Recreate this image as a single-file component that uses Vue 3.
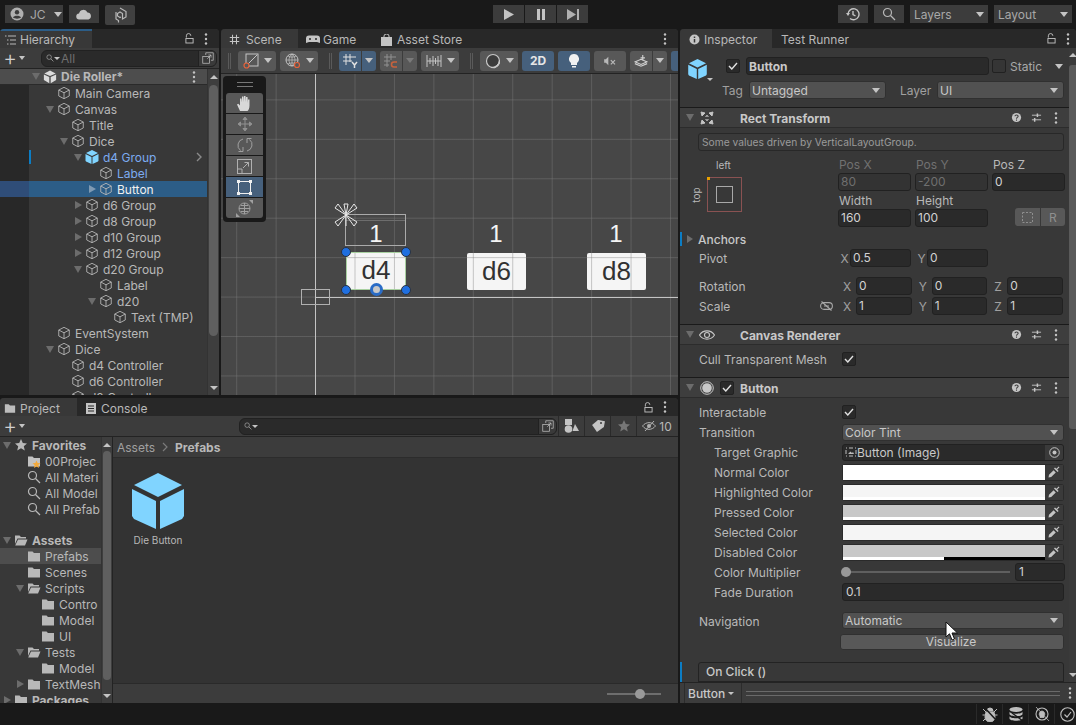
<template>
  <div class="app">
    <!-- shared icons -->
    <svg class="defs" width="0" height="0">
      <symbol id="cube" viewBox="0 0 16 16"><path d="M8 1.5 14 4.6V11.4L8 14.5 2 11.4V4.6ZM2 4.6 8 7.8 14 4.6M8 7.8V14.5" fill="none" stroke="currentColor" stroke-width="1"/></symbol>
      <symbol id="prefab" viewBox="0 0 52 56"><path d="M26 0 50 12 26 24 2 12ZM0 16 24 28V56L2 46 0 43ZM52 16 28 28V56L50 46 52 43Z" fill="currentColor"/></symbol>
      <symbol id="folder" viewBox="0 0 14 14"><path d="M1 2.5h4.5L7 4h6v8.5H1Z" fill="currentColor"/></symbol>
      <symbol id="folder-open" viewBox="0 0 14 14"><path d="M1 2.5h4.5L7 4h5v1.5H3.5L1 11ZM4 6.5h9.5L11 12.5H1.2Z" fill="currentColor"/></symbol>
      <symbol id="search" viewBox="0 0 14 14"><circle cx="5.5" cy="5.5" r="4" fill="none" stroke="currentColor" stroke-width="1.2"/><path d="M8.5 8.5 13 13" stroke="currentColor" stroke-width="1.3"/></symbol>
      <symbol id="lock" viewBox="0 0 10 12"><path d="M1.5 5V3a2.5 2.5 0 0 1 5 0" fill="none" stroke="currentColor"/><rect x="1" y="6" width="8" height="5" fill="none" stroke="currentColor"/></symbol>
      <symbol id="dots" viewBox="0 0 4 12"><circle cx="2" cy="1.5" r="1.2" fill="currentColor"/><circle cx="2" cy="6" r="1.2" fill="currentColor"/><circle cx="2" cy="10.5" r="1.2" fill="currentColor"/></symbol>
      <symbol id="grid" viewBox="0 0 14 14"><path d="M4.5 1v12M9.5 1v12M1 4.5h12M1 9.5h12" stroke="currentColor" stroke-width="1.3" fill="none"/></symbol>
      <symbol id="pop" viewBox="0 0 16 16"><rect x="1" y="6" width="9" height="9" fill="none" stroke="currentColor"/><path d="M5 4V1h10v10h-3M7 9l5-5M8.5 4H12v3.5" fill="none" stroke="currentColor"/></symbol>
      <symbol id="star" viewBox="0 0 14 14"><path d="M7 1 8.8 5 13 5.4 9.8 8.2 10.8 12.5 7 10.2 3.2 12.5 4.2 8.2 1 5.4 5.2 5Z" fill="currentColor"/></symbol>
      <symbol id="help" viewBox="0 0 12 12"><circle cx="6" cy="6" r="5" fill="currentColor"/><path d="M4.3 4.7C4.3 2.9 7.8 2.9 7.8 4.7 7.8 6 6 5.8 6 7.3M6 8.3v1.3" stroke="#3e3e3e" stroke-width="1.2" fill="none"/></symbol>
      <symbol id="sliders" viewBox="0 0 12 12"><path d="M1 3.5h10M1 8.5h10" stroke="currentColor" fill="none"/><path d="M7 1.5v4M4 6.5v4" stroke="currentColor" stroke-width="1.6" fill="none"/></symbol>
      <symbol id="pick" viewBox="0 0 12 12"><path d="M.5 11.5 1 8.8 5.6 4.2 7.8 6.4 3.2 11ZM6 2.4 9.6 6 10.6 5 9.2 3.6 11.5 1.3 10.7.5 8.4 2.8 7 1.4Z" fill="currentColor"/></symbol>
      <symbol id="gizmo" viewBox="0 0 24 24"><path d="M12 12 4 1 1 5ZM12 12 20 1 23 5ZM12 12 1 19 4 23ZM12 12 23 19 20 23ZM12 12 10 1H14ZM12 12V23" fill="none" stroke="currentColor" stroke-width="1"/></symbol>
    </svg>

    <!-- top toolbar -->
    <header class="topbar">
      <div class="tb-group">
        <button class="tb-btn account">
          <svg class="ic14" viewBox="0 0 14 14"><circle cx="7" cy="7" r="6.5" fill="#b0b0b0"/><circle cx="7" cy="5.2" r="2.2" fill="#3c3c3c"/><path d="M3 10.5C4 8 10 8 11 10.5 9.5 12 4.5 12 3 10.5Z" fill="#3c3c3c"/></svg>
          <span>JC</span><i class="caret"></i>
        </button>
        <button class="tb-btn cloud">
          <svg width="16" height="11" viewBox="0 0 16 11"><path d="M3.5 10.5a3 3 0 0 1-.5-6 4.5 4.5 0 0 1 8.5-1 3.6 3.6 0 0 1 1 7Z" fill="#c4c4c4"/></svg>
        </button>
        <button class="tb-btn collab">
          <svg width="14" height="16" viewBox="0 0 14 16"><path d="M7 1 13 4.5V10L9.5 12V6.5L7 5 4.5 6.5V9L7 10.5 8 10M3 5V12L5.5 13.5V15.5" fill="none" stroke="#b8b8b8" stroke-width="1.2"/></svg>
        </button>
      </div>
      <div class="tb-group play">
        <button class="tb-btn"><svg width="10" height="11" viewBox="0 0 10 11"><path d="M0 0 10 5.5 0 11Z" fill="#c4c4c4"/></svg></button>
        <button class="tb-btn"><svg width="8" height="11" viewBox="0 0 8 11"><path d="M0 0h3v11H0ZM5 0h3v11H5Z" fill="#c4c4c4"/></svg></button>
        <button class="tb-btn"><svg width="12" height="11" viewBox="0 0 12 11"><path d="M0 0 9 5.5 0 11ZM10 0h2v11h-2Z" fill="#b0b0b0"/></svg></button>
      </div>
      <div class="tb-group right">
        <button class="tb-btn cloud">
          <svg width="14" height="14" viewBox="0 0 14 14"><path d="M2 7A5.5 5.5 0 1 1 4 11.5M7 4v3.5L9.5 9" fill="none" stroke="#c4c4c4" stroke-width="1.4"/><path d="M0 6h4L2 9Z" fill="#c4c4c4"/></svg>
        </button>
        <button class="tb-btn cloud"><svg class="ic14 light"><use href="#search"/></svg></button>
        <button class="tb-btn drop"><span>Layers</span><i class="caret"></i></button>
        <button class="tb-btn drop"><span>Layout</span><i class="caret"></i></button>
      </div>
    </header>

    <main class="workspace">
      <div class="left">
        <div class="left-top">
          <!-- hierarchy -->
          <section class="panel hierarchy">
            <div class="tabs">
              <div class="tab on hier-tab">
                <svg width="11" height="10" viewBox="0 0 11 10"><path d="M0 1h1.5M3 1h8M2 5h1.5M5 5h6M2 9h1.5M5 9h6" stroke="#b8b8b8" fill="none"/></svg>
                <span>Hierarchy</span>
              </div>
              <div class="tab-tools wide-pad">
                <svg class="lock"><use href="#lock"/></svg>
                <svg class="dots"><use href="#dots"/></svg>
              </div>
            </div>
            <div class="bar">
              <span class="plus">+</span><i class="caret small"></i>
              <div class="search hsearch">
                <svg class="ic10"><use href="#search"/></svg><i class="caret tiny"></i>
                <span class="ph">All</span>
                <span class="pop"><svg class="ic12"><use href="#pop"/></svg></span>
              </div>
            </div>
            <div class="hier-body">
              <div class="tree">
                <div
                  v-for="row in hierarchyRows"
                  :key="row.id"
                  class="hrow"
                  :class="{ sel: row.selected, scene: row.scene, prefab: row.prefab }"
                  :style="{ paddingLeft: 43 + row.depth * 14 + 'px' }"
                >
                  <i v-if="row.selected" class="gutter-sel"></i>
                  <i v-if="row.changed" class="changed"></i>
                  <span class="slot"><i v-if="row.arrow" :class="row.arrow === 'down' ? 'tri-d' : 'tri-r'"></i></span>
                  <svg v-if="row.scene" class="ic14 logo" viewBox="0 0 16 16"><path d="M8 .5 14.5 4 8 6.8 1.5 4ZM1 5.2 7.2 8V15L1 11.5ZM15 5.2 8.8 8V15L15 11.5Z" fill="currentColor"/></svg>
                  <svg v-else-if="row.blue" class="ic14 bluecube"><use href="#prefab"/></svg>
                  <svg v-else class="ic14"><use href="#cube"/></svg>
                  <span class="label">{{ row.name }}</span>
                  <svg v-if="row.scene" class="dots scene-dots"><use href="#dots"/></svg>
                  <svg v-if="row.blue" class="more" width="6" height="10" viewBox="0 0 6 10"><path d="M1 1 5 5 1 9" fill="none" stroke="#8a8a8a" stroke-width="1.4"/></svg>
                </div>
              </div>
              <div class="vbar">
                <i class="tri-u"></i>
                <div class="vthumb hthumb"></div>
                <i class="tri-dn"></i>
              </div>
            </div>
          </section>

          <!-- scene -->
          <section class="panel scene">
            <div class="tabs">
              <div class="tab on scene-tab"><svg class="ic11"><use href="#grid"/></svg><span>Scene</span></div>
              <div class="tab game-tab">
                <svg width="14" height="9" viewBox="0 0 14 9"><path d="M3 .5h8a3 3 0 0 1 3 3V8L11 7H3L0 8V3.5a3 3 0 0 1 3-3Z" fill="#c4c4c4"/><circle cx="4" cy="4" r="1" fill="#282828"/><circle cx="10" cy="4" r="1" fill="#282828"/></svg>
                <span>Game</span>
              </div>
              <div class="tab store-tab">
                <svg width="11" height="12" viewBox="0 0 11 12"><path d="M3 3V2a2.5 2 0 0 1 5 0v1" fill="none" stroke="#c4c4c4"/><path d="M0 3h11v9H0Z" fill="#c4c4c4"/></svg>
                <span>Asset Store</span>
              </div>
              <div class="tab-tools wide-pad"><svg class="dots"><use href="#dots"/></svg></div>
            </div>
            <div class="bar scene-bar">
              <i class="sep"></i>
              <button class="sb w38">
                <svg class="ic16" viewBox="0 0 16 16"><rect x="3" y="1" width="12" height="12" fill="none" stroke="#c4c4c4"/><path d="M5 11 14 2" stroke="#c4c4c4"/><circle cx="3.5" cy="12.5" r="2.5" fill="#585858" stroke="#e8623a" stroke-width="1.2"/></svg>
                <i class="caret"></i>
              </button>
              <button class="sb w38">
                <svg class="ic16" viewBox="0 0 16 16"><circle cx="7" cy="7" r="6" fill="none" stroke="#c4c4c4"/><path d="M1 7h12M7 1v12M3 3c3 1.5 5 1.5 8 0M3 11c3-1.5 5-1.5 8 0M7 1C3 4 3 10 7 13M7 1c4 3 4 9 0 12" fill="none" stroke="#c4c4c4" stroke-width=".7"/><circle cx="12" cy="12" r="2.5" fill="#585858" stroke="#e8623a" stroke-width="1.2"/></svg>
                <i class="caret"></i>
              </button>
              <i class="sep"></i>
              <div class="split">
                <button class="sb on seg-l">
                  <svg class="ic16" viewBox="0 0 16 16"><path d="M4 1v11M8 1v8M1 4h13M1 8h9" stroke="#e0e0e0" fill="none"/><path d="M10 9 12.5 12 15 9M12.5 12v3" stroke="#e0e0e0" stroke-width="1.5" fill="none"/></svg>
                </button>
                <button class="sb on seg-r"><i class="caret"></i></button>
              </div>
              <div class="split">
                <button class="sb seg-l">
                  <svg class="ic16" viewBox="0 0 16 16"><path d="M4 1v13M8 1v6M1 4h12M1 8h6M1 12h5" stroke="#909090" fill="none"/><path d="M14 9H11a2.5 2.5 0 0 0 0 5h3" stroke="#c8623c" stroke-width="1.5" fill="none"/></svg>
                </button>
                <button class="sb seg-r"><i class="caret dim"></i></button>
              </div>
              <button class="sb w38">
                <svg class="ic16" viewBox="0 0 16 16"><path d="M1 2v12M15 2v12M1 8h14M4 5v6M7 3v10M9.5 5v6M12 3v10" fill="none" stroke="#c4c4c4"/></svg>
                <i class="caret"></i>
              </button>
              <i class="sep"></i>
              <button class="sb w38">
                <svg class="ic16" viewBox="0 0 16 16"><circle cx="8" cy="8" r="6.5" fill="#3c3c3c" stroke="#c8c8c8" stroke-width="1.2"/><path d="M14.5 7A6.5 6.5 0 0 1 6 14.5 8 8 0 0 0 14.5 7Z" fill="#c8c8c8" stroke="#c8c8c8"/></svg>
                <i class="caret"></i>
              </button>
              <button class="sb on w32 two-d">2D</button>
              <button class="sb on w32">
                <svg width="10" height="14" viewBox="0 0 10 14"><path d="M5 0a5 5 0 0 1 3 9v2H2V9A5 5 0 0 1 5 0ZM3 12h4v1.5H3Z" fill="#f0f0f0"/></svg>
              </button>
              <button class="sb w32">
                <svg width="12" height="10" viewBox="0 0 14 12"><path d="M0 4h2l3-3v10L2 8H0Z" fill="#b8b8b8"/><path d="M8 5l5 5M13 5l-5 5" stroke="#b8b8b8" stroke-width="1.5" fill="none"/></svg>
              </button>
              <div class="split">
                <button class="sb seg-l">
                  <svg width="14" height="14" viewBox="0 0 16 16"><path d="M8 6 15 9 8 12 1 9ZM1 11l7 3 7-3" fill="none" stroke="#d0d0d0" stroke-width="1.3"/><path d="M10 1v6M7.5 4.5h5" stroke="#d0d0d0" stroke-width="1.3"/></svg>
                </button>
                <button class="sb seg-r"><i class="caret"></i></button>
              </div>
              <button class="sb on stub"></button>
            </div>

            <div class="viewport">
              <!-- canvas contents, placed at their scene coordinates -->
              <span class="count" style="left:145px">1</span>
              <span class="count" style="left:265px">1</span>
              <span class="count" style="left:385px">1</span>
              <div class="die die-sel">d4</div>
              <div class="die" style="left:246px">d6</div>
              <div class="die" style="left:366px">d8</div>

              <div class="gridlines"></div>
              <i class="axis-v"></i>
              <i class="axis-h"></i>
              <i class="origin-box"></i>
              <i class="label-rect"></i>
              <i class="label-rect-2"></i>
              <i class="sel-rect"></i>
              <svg class="anchor-star"><use href="#gizmo"/></svg>
              <i class="handle" style="left:120px;top:173px"></i>
              <i class="handle" style="left:180px;top:173px"></i>
              <i class="handle" style="left:120px;top:211px"></i>
              <i class="handle" style="left:180px;top:211px"></i>
              <i class="pivot"></i>

              <div class="palette">
                <div class="grip"></div>
                <button class="tool">
                  <svg width="17" height="17" viewBox="0 0 17 17"><path d="M4 16 1 9.5 2.3 8.8 4 10.5V3.5H5.5L6 7.5V1.5H7.5L8 7V1H9.5L10 7V2H11.5L12 8V4.5H13.5V10.5C13.5 13.5 12.5 15 11.5 16Z" fill="#d8d8d8"/></svg>
                </button>
                <button class="tool">
                  <svg width="16" height="16" viewBox="0 0 16 16"><path d="M8 1 10 3.5H6ZM8 15 6 12.5H10ZM1 8 3.5 6V10ZM15 8 12.5 10V6ZM3 8H13M8 3V13" fill="#909090" stroke="#909090"/></svg>
                </button>
                <button class="tool">
                  <svg width="16" height="16" viewBox="0 0 16 16"><path d="M3.5 13.5A6.5 6.5 0 0 1 6 2M12.5 2.5A6.5 6.5 0 0 1 10 14M10 1.5V6M6 10v4.5M6 14.5H1.5M10 1.5h4.5" fill="none" stroke="#a0a0a0" stroke-width="1"/></svg>
                </button>
                <button class="tool">
                  <svg width="15" height="15" viewBox="0 0 15 15"><rect x=".5" y=".5" width="14" height="14" fill="none" stroke="#b0b0b0"/><path d="M.5 10H5V14.5M6 9 11.5 3.5M7.5 3.5h4v4" fill="none" stroke="#b0b0b0"/></svg>
                </button>
                <button class="tool on">
                  <svg width="15" height="15" viewBox="0 0 15 15"><path d="M3 1.5h9M3 13.5h9M1.5 3v9M13.5 3v9" stroke="#f0f0f0" fill="none"/><path d="M0 0h3v3H0ZM12 0h3v3h-3ZM0 12h3v3H0ZM12 12h3v3h-3Z" fill="#f0f0f0"/></svg>
                </button>
                <button class="tool">
                  <svg width="17" height="17" viewBox="0 0 17 17"><circle cx="8.5" cy="8.5" r="5.5" fill="none" stroke="#a0a0a0"/><path d="M8.5 3v11M3 8.5h11M5 5.5h7M5 11.5h7" stroke="#a0a0a0" fill="none"/><path d="M13 0H17V4ZM0 17V13L4 17Z" fill="#a0a0a0"/></svg>
                </button>
              </div>
            </div>
          </section>
        </div>

        <!-- project -->
        <section class="panel project">
          <div class="tabs">
            <div class="tab on proj-tab"><svg class="ic12"><use href="#folder"/></svg><span>Project</span></div>
            <div class="tab console-tab">
              <svg width="10" height="11" viewBox="0 0 10 11"><path d="M0 0h10v11H0Z" fill="#c4c4c4"/><path d="M2 3h6M2 5.5h6M2 8h6" stroke="#282828"/></svg>
              <span>Console</span>
            </div>
            <div class="tab-tools wide-pad">
              <svg class="lock"><use href="#lock"/></svg>
              <svg class="dots"><use href="#dots"/></svg>
            </div>
          </div>
          <div class="bar proj-bar">
            <span class="plus">+</span><i class="caret small"></i>
            <div class="search psearch">
              <svg class="ic10"><use href="#search"/></svg><i class="caret tiny"></i>
              <span class="ph"></span>
              <span class="pop"><svg class="ic12"><use href="#pop"/></svg></span>
            </div>
            <div class="filter">
              <svg width="16" height="14" viewBox="0 0 16 14"><path d="M1 0h7v6H1Z" fill="#c4c4c4"/><circle cx="4.5" cy="10" r="3.8" fill="#c4c4c4"/><path d="M11 5 15 12H8.5Z" fill="#c4c4c4"/></svg>
            </div>
            <div class="filter">
              <svg width="14" height="12" viewBox="0 0 14 12"><path d="M6 0h7v6L7 12 1 6Z" fill="#c4c4c4" transform="rotate(10 7 6)"/><circle cx="10" cy="3" r="1" fill="#3c3c3c"/></svg>
            </div>
            <div class="filter"><svg class="ic14 dimstar"><use href="#star"/></svg></div>
            <div class="filter hidden-pkgs">
              <svg width="14" height="12" viewBox="0 0 14 12"><path d="M.5 6C4 1.5 10 1.5 13.5 6 10 10.5 4 10.5 .5 6ZM3 11 12 1" fill="none" stroke="#b0b0b0"/><circle cx="7" cy="6" r="2" fill="#b0b0b0"/></svg>
              <span>10</span>
            </div>
          </div>
          <div class="proj-body">
            <div class="proj-side">
              <div class="tree ptree">
                <div
                  v-for="row in projectRows"
                  :key="row.id"
                  class="prow"
                  :class="{ sel: row.selected, head: row.head, gap: row.gap }"
                  :style="{ paddingLeft: row.depth * 14 - 1 + 'px' }"
                >
                  <span class="slot"><i v-if="row.arrow" :class="row.arrow === 'down' ? 'tri-d' : 'tri-r'"></i></span>
                  <svg v-if="row.icon === 'favfolder'" class="ic14 fav" viewBox="0 0 14 14">
                    <path d="M1 2.5h4.5L7 4h6v8.5H1Z" fill="#c2c2c2"/>
                    <path d="M9.5 6.5 10.7 9 13.5 9.3 11.4 11.1 12 14 9.5 12.5 7 14 7.6 11.1 5.5 9.3 8.3 9Z" fill="#f3a93a"/>
                  </svg>
                  <svg v-else class="ic14"><use :href="'#' + row.icon"/></svg>
                  <span class="label">{{ row.name }}</span>
                </div>
              </div>
              <div class="vbar pbar">
                <i class="tri-u"></i>
                <div class="vthumb pthumb"></div>
                <i class="tri-dn"></i>
              </div>
            </div>
            <div class="proj-main">
              <div class="crumbs">
                <span>Assets</span>
                <svg width="6" height="10" viewBox="0 0 6 10"><path d="M1 1 5 5 1 9" fill="none" stroke="#7a7a7a" stroke-width="1.2"/></svg>
                <b>Prefabs</b>
              </div>
              <div class="assets">
                <div class="asset">
                  <svg class="bigcube"><use href="#prefab"/></svg>
                  <span>Die Button</span>
                </div>
              </div>
              <div class="proj-foot">
                <div class="zoom"><i></i></div>
              </div>
            </div>
          </div>
        </section>
      </div>

      <!-- inspector -->
      <section class="panel inspector">
        <div class="tabs">
          <div class="tab on insp-tab">
            <svg width="11" height="11" viewBox="0 0 11 11"><circle cx="5.5" cy="5.5" r="5" fill="#c4c4c4"/><path d="M5.5 2.5v1.5M5.5 5v3.5" stroke="#383838" stroke-width="1.5"/></svg>
            <span>Inspector</span>
          </div>
          <div class="tab runner-tab"><span>Test Runner</span></div>
          <div class="tab-tools">
            <svg class="lock"><use href="#lock"/></svg>
            <svg class="dots"><use href="#dots"/></svg>
          </div>
        </div>
        <div class="insp-wrap">
          <div class="insp-content">
            <div class="go-head">
              <div class="go-icon">
                <svg class="go-cube"><use href="#prefab"/></svg>
                <i class="caret tiny"></i>
              </div>
              <div class="go-fields">
                <div class="go-row">
                  <span class="check"><svg width="10" height="8" viewBox="0 0 10 8"><path d="M1 4 3.8 7 9 1" fill="none" stroke="#e0e0e0" stroke-width="1.4"/></svg></span>
                  <input class="field name" value="Button" readonly />
                  <span class="check blank"></span>
                  <span class="static">Static</span>
                  <i class="caret"></i>
                </div>
                <div class="go-row second">
                  <span class="go-lbl tag-lbl">Tag</span>
                  <div class="dropdown tag-dd"><span>Untagged</span><i class="caret"></i></div>
                  <span class="go-lbl layer-lbl">Layer</span>
                  <div class="dropdown layer-dd"><span>UI</span><i class="caret"></i></div>
                </div>
              </div>
            </div>

            <div class="comp-head">
              <i class="tri-d"></i>
              <svg class="comp-ic" viewBox="0 0 14 14"><path d="M1 1 5 2 2 5ZM13 1 12 5 9 2ZM1 13 2 9 5 12ZM13 13 9 12 12 9ZM5.5 5.5 7 4.5 8.5 5.5M5.5 8.5 7 9.5 8.5 8.5" fill="#c4c4c4" stroke="#c4c4c4"/></svg>
              <span class="comp-title">Rect Transform</span>
              <div class="comp-tools">
                <svg class="ic11"><use href="#help"/></svg>
                <svg class="ic11"><use href="#sliders"/></svg>
                <svg class="dots"><use href="#dots"/></svg>
              </div>
            </div>
            <div class="rect-body">
              <div class="helpbox">Some values driven by VerticalLayoutGroup.</div>
              <div class="rect-main">
                <div class="anchor-side">
                  <span class="left-lbl">left</span>
                  <span class="top-lbl">top</span>
                  <div class="anchor-box"><i class="inner"></i><i class="dot"></i></div>
                </div>
                <div class="rect-grid">
                  <div class="rg-cell"><span class="rg-lbl off">Pos X</span><div class="field off">80</div></div>
                  <div class="rg-cell"><span class="rg-lbl off">Pos Y</span><div class="field off">-200</div></div>
                  <div class="rg-cell"><span class="rg-lbl">Pos Z</span><div class="field">0</div></div>
                  <div class="rg-cell"><span class="rg-lbl">Width</span><div class="field">160</div></div>
                  <div class="rg-cell"><span class="rg-lbl">Height</span><div class="field">100</div></div>
                  <div class="rg-cell btns">
                    <div class="blueprint">
                      <span><svg width="11" height="11" viewBox="0 0 11 11"><rect x=".5" y=".5" width="10" height="10" fill="none" stroke="#8f8f8f" stroke-dasharray="2 1.5"/></svg></span>
                      <span>R</span>
                    </div>
                  </div>
                </div>
              </div>
              <div class="anchors-row"><i class="bluebar"></i><i class="tri-r"></i><span>Anchors</span></div>
              <div class="xyz pivot-row">
                <span class="xyz-lbl">Pivot</span>
                <span class="axis">X</span><div class="field">0.5</div>
                <span class="axis">Y</span><div class="field">0</div>
              </div>
              <div class="xyz rot-row">
                <span class="xyz-lbl">Rotation</span>
                <span class="axis">X</span><div class="field">0</div>
                <span class="axis">Y</span><div class="field">0</div>
                <span class="axis">Z</span><div class="field">0</div>
              </div>
              <div class="xyz scale-row">
                <span class="xyz-lbl">Scale</span>
                <svg class="unlink" width="13" height="10" viewBox="0 0 13 10"><rect x=".6" y="1.6" width="11.8" height="6.8" rx="3.4" fill="none" stroke="#a8a8a8" stroke-width="1.1"/><path d="M1.5 .5 11.5 9.5" stroke="#a8a8a8" stroke-width="1.1"/><path d="M4 5h5" stroke="#a8a8a8"/></svg>
                <span class="axis">X</span><div class="field">1</div>
                <span class="axis">Y</span><div class="field">1</div>
                <span class="axis">Z</span><div class="field">1</div>
              </div>
            </div>

            <div class="comp-head">
              <i class="tri-d"></i>
              <svg class="comp-ic eye" viewBox="0 0 16 12"><path d="M.5 6C4 .5 12 .5 15.5 6 12 11.5 4 11.5 .5 6Z" fill="none" stroke="#c8c8c8" stroke-width="1.1"/><circle cx="8" cy="6" r="2.5" fill="none" stroke="#c8c8c8" stroke-width="1.1"/></svg>
              <span class="comp-title">Canvas Renderer</span>
              <div class="comp-tools">
                <svg class="ic11"><use href="#help"/></svg>
                <svg class="ic11"><use href="#sliders"/></svg>
                <svg class="dots"><use href="#dots"/></svg>
              </div>
            </div>
            <div class="canvas-body">
              <div class="prop">
                <span class="prop-lbl">Cull Transparent Mesh</span>
                <span class="check"><svg width="10" height="8" viewBox="0 0 10 8"><path d="M1 4 3.8 7 9 1" fill="none" stroke="#e0e0e0" stroke-width="1.4"/></svg></span>
              </div>
            </div>

            <div class="comp-head">
              <i class="tri-d"></i>
              <svg class="comp-ic" viewBox="0 0 14 14"><circle cx="7" cy="7" r="6.3" fill="none" stroke="#c8c8c8"/><circle cx="7" cy="7" r="4.8" fill="#c8c8c8"/></svg>
              <span class="check head-check"><svg width="10" height="8" viewBox="0 0 10 8"><path d="M1 4 3.8 7 9 1" fill="none" stroke="#e0e0e0" stroke-width="1.4"/></svg></span>
              <span class="comp-title">Button</span>
              <div class="comp-tools">
                <svg class="ic11"><use href="#help"/></svg>
                <svg class="ic11"><use href="#sliders"/></svg>
                <svg class="dots"><use href="#dots"/></svg>
              </div>
            </div>
            <div class="button-body">
              <div class="prop">
                <span class="prop-lbl">Interactable</span>
                <span class="check"><svg width="10" height="8" viewBox="0 0 10 8"><path d="M1 4 3.8 7 9 1" fill="none" stroke="#e0e0e0" stroke-width="1.4"/></svg></span>
              </div>
              <div class="prop">
                <span class="prop-lbl">Transition</span>
                <div class="dropdown wide"><span>Color Tint</span><i class="caret"></i></div>
              </div>
              <div class="prop indent">
                <span class="prop-lbl">Target Graphic</span>
                <div class="objfield">
                  <svg width="12" height="10" viewBox="0 0 12 10"><path d="M1 1h1M4 1h4M10 1h1M1 9h1M4 9h4M10 9h1M1 3v4M11 3v4" stroke="#bdbdbd" fill="none"/><path d="M3 7 5.5 4.5 7 6 8 5 9 7Z" fill="#bdbdbd"/></svg>
                  <span>Button (Image)</span>
                  <span class="obj-pick"><svg width="11" height="11" viewBox="0 0 11 11"><circle cx="5.5" cy="5.5" r="4.8" fill="none" stroke="#c4c4c4"/><circle cx="5.5" cy="5.5" r="2" fill="#c4c4c4"/></svg></span>
                </div>
              </div>
              <div v-for="c in colorRows" :key="c.name" class="prop indent">
                <span class="prop-lbl">{{ c.name }}</span>
                <div class="color">
                  <div class="swatch" :style="{ background: c.color }">
                    <i class="strip" :class="c.strip"></i>
                  </div>
                  <span class="picker"><svg width="12" height="12"><use href="#pick"/></svg></span>
                </div>
              </div>
              <div class="prop indent">
                <span class="prop-lbl">Color Multiplier</span>
                <div class="slider"><i class="track"></i><i class="thumb"></i></div>
                <div class="field mult">1</div>
              </div>
              <div class="prop indent">
                <span class="prop-lbl">Fade Duration</span>
                <div class="field wide">0.1</div>
              </div>
              <div class="prop nav">
                <span class="prop-lbl">Navigation</span>
                <div class="dropdown wide"><span>Automatic</span><i class="caret"></i></div>
              </div>
              <button class="visualize">Visualize</button>
              <div class="onclick-wrap">
                <i class="bluebar"></i>
                <div class="onclick">On Click ()</div>
              </div>
            </div>
          </div>
          <div class="insp-scroll">
            <i class="tri-u"></i>
            <div class="insp-thumb"></div>
            <i class="tri-dn"></i>
          </div>
        </div>
        <div class="mini">
          <div class="mini-tab"><span>Button</span><i class="caret tiny"></i></div>
          <div class="mini-lines"></div>
          <svg class="dots"><use href="#dots"/></svg>
        </div>
      </section>
    </main>

    <!-- status bar -->
    <footer class="status">
      <span class="st-ic">
        <svg width="16" height="16" viewBox="0 0 16 16"><path d="M5 5a3 3 0 0 1 6 0ZM4 6h8l1 5a5 5 0 0 1-10 0ZM1 3l3 3M15 3l-3 3M.5 9H3M13 9h2.5M1 15l2.5-2.5M15 15l-2.5-2.5" fill="#bdbdbd" stroke="#bdbdbd"/><path d="M2 1 15 15" stroke="#191919" stroke-width="1.5"/></svg>
      </span>
      <span class="st-ic">
        <svg width="16" height="16" viewBox="0 0 16 16"><ellipse cx="8" cy="3.5" rx="6.5" ry="2.5" fill="#bdbdbd"/><path d="M1.5 5.5c0 3 13 3 13 0V8c0 3-13 3-13 0ZM1.5 10c0 3 13 3 13 0v2.5c0 3-13 3-13 0Z" fill="#bdbdbd"/><path d="M4 7 15 15" stroke="#191919" stroke-width="1.3"/></svg>
      </span>
      <span class="st-ic">
        <svg width="16" height="16" viewBox="0 0 16 16"><circle cx="8" cy="8" r="6" fill="none" stroke="#bdbdbd" stroke-width="1.1"/><path d="M8 5a3 3 0 0 1 2 5v1.5H6V10a3 3 0 0 1 2-5ZM2 1 15 15" fill="#bdbdbd" stroke="#bdbdbd" stroke-width=".8"/></svg>
      </span>
      <span class="st-ic last">
        <svg width="15" height="15" viewBox="0 0 15 15"><circle cx="7.5" cy="7.5" r="6.7" fill="none" stroke="#bdbdbd" stroke-width="1.1"/><path d="M4.5 7.5 7 10 11 5" fill="none" stroke="#bdbdbd" stroke-width="1.2"/></svg>
      </span>
    </footer>

    <!-- mouse pointer in the capture -->
    <svg class="pointer" width="14" height="20" viewBox="0 0 14 20"><path d="M1 1V16L4.5 12.8 7 19 9.5 18 7 12H12.5Z" fill="#fff" stroke="#111" stroke-width="1"/></svg>
  </div>
</template>

<script setup>
let rowId = 0
const h = (name, depth, arrow, extra = {}) => ({ id: rowId++, name, depth, arrow, ...extra })

const hierarchyRows = [
  h("Die Roller*", -1, "down", { scene: true }),
  h("Main Camera", 0),
  h("Canvas", 0, "down"),
  h("Title", 1),
  h("Dice", 1, "down"),
  h("d4 Group", 2, "down", { blue: true, prefab: true, changed: true }),
  h("Label", 3, null, { prefab: true }),
  h("Button", 3, "right", { selected: true }),
  h("d6 Group", 2, "right"),
  h("d8 Group", 2, "right"),
  h("d10 Group", 2, "right"),
  h("d12 Group", 2, "right"),
  h("d20 Group", 2, "down"),
  h("Label", 3),
  h("d20", 3, "down"),
  h("Text (TMP)", 4),
  h("EventSystem", 0),
  h("Dice", 0, "down"),
  h("d4 Controller", 1),
  h("d6 Controller", 1),
  h("d8 Controller", 1),
]

// names as far as the narrow column shows them
const projectRows = [
  h("Favorites", 0, "down", { icon: "star", head: true }),
  h("00Projec", 1, null, { icon: "favfolder" }),
  h("All Materi", 1, null, { icon: "search" }),
  h("All Model", 1, null, { icon: "search" }),
  h("All Prefab", 1, null, { icon: "search" }),
  h("Assets", 0, "down", { icon: "folder-open", head: true, gap: true }),
  h("Prefabs", 1, null, { icon: "folder", selected: true }),
  h("Scenes", 1, null, { icon: "folder" }),
  h("Scripts", 1, "down", { icon: "folder-open" }),
  h("Contro", 2, null, { icon: "folder" }),
  h("Model", 2, null, { icon: "folder" }),
  h("UI", 2, null, { icon: "folder" }),
  h("Tests", 1, "down", { icon: "folder-open" }),
  h("Model", 2, null, { icon: "folder" }),
  h("TextMesh", 1, "right", { icon: "folder" }),
  h("Packages", 0, "right", { icon: "folder", head: true }),
]

const colorRows = [
  { name: "Normal Color", color: "#ffffff", strip: "white" },
  { name: "Highlighted Color", color: "#f5f5f5", strip: "white" },
  { name: "Pressed Color", color: "#c8c8c8", strip: "white" },
  { name: "Selected Color", color: "#f5f5f5", strip: "" },
  { name: "Disabled Color", color: "#c8c8c8", strip: "half" },
]
</script>

<style>
html, body { margin: 0; background: #191919; }
</style>

<style scoped>
.app {
  position: relative;
  width: 1076px;
  height: 725px;
  overflow: hidden;
  background: #191919;
  color: #b8b8b8;
  font-family: Inter, "Liberation Sans", sans-serif;
  font-size: 12px;
  display: flex;
  flex-direction: column;
}
.app i { display: block; flex: none; }
button { font: inherit; color: inherit; border: 0; padding: 0; }
.defs { position: absolute; }
svg { display: block; flex: none; }
.ic10 { width: 8px; height: 8px; color: #a8a8a8; }
.ic11 { width: 11px; height: 11px; color: #c4c4c4; }
.ic12 { width: 12px; height: 12px; color: #bdbdbd; }
.ic14 { width: 14px; height: 14px; color: #b8b8b8; }
.ic16 { width: 16px; height: 16px; }
.lock { width: 9px; height: 11px; color: #c4c4c4; }
.dots { width: 4px; height: 12px; color: #c4c4c4; }

.caret {
  width: 0;
  height: 0;
  border-left: 4px solid transparent;
  border-right: 4px solid transparent;
  border-top: 5px solid #c4c4c4;
}
.caret.small { border-left-width: 3.5px; border-right-width: 3.5px; border-top-width: 4px; }
.caret.tiny { border-left-width: 3px; border-right-width: 3px; border-top-width: 3px; }
.caret.dim { border-top-color: #7a7a7a; }
.tri-d { width: 0; height: 0; border-left: 5px solid transparent; border-right: 5px solid transparent; border-top: 8px solid #6c6c6c; }
.tri-r { width: 0; height: 0; border-top: 5px solid transparent; border-bottom: 5px solid transparent; border-left: 8px solid #6c6c6c; }
.tri-u { width: 0; height: 0; border-left: 4px solid transparent; border-right: 4px solid transparent; border-bottom: 4px solid #c4c4c4; }
.tri-dn { width: 0; height: 0; border-left: 4px solid transparent; border-right: 4px solid transparent; border-top: 4px solid #c4c4c4; }

/* top toolbar */
.topbar { height: 29px; flex: none; display: flex; padding: 5px 4px 0 5px; box-sizing: border-box; }
.tb-group { display: flex; gap: 6px; height: 18px; }
.tb-btn { background: #3c3c3c; height: 18px; display: flex; align-items: center; justify-content: center; color: #a8a8a8; font-size: 12px; }
.account { width: 58px; justify-content: flex-start; padding-left: 5px; gap: 6px; box-sizing: border-box; }
.account .caret { margin-left: 2px; }
.cloud { width: 30px; }
.collab { width: 30px; height: 20px; border-radius: 2px; background: #404040; }
.play { margin-left: 358px; gap: 1px; }
.play .tb-btn { width: 31px; }
.right { margin-left: auto; }
.drop { width: 78px; justify-content: space-between; padding: 0 4px; box-sizing: border-box; }

/* panels */
.workspace { flex: 1; display: flex; gap: 2px; min-height: 0; }
.left { width: 678px; display: flex; flex-direction: column; gap: 3px; }
.left-top { height: 366px; display: flex; gap: 2px; }
.panel { background: #383838; display: flex; flex-direction: column; overflow: hidden; border-radius: 4px 4px 0 0; }
.tabs { height: 19px; flex: none; background: #282828; display: flex; position: relative; }
.tab { height: 19px; display: flex; align-items: center; gap: 4px; box-sizing: border-box; color: #b8b8b8; padding-top: 2px; }
.tab.on { background: #383838; }
.tab-tools { margin-left: auto; display: flex; align-items: center; gap: 10px; padding-right: 6px; }
.tab-tools.wide-pad { padding-right: 11px; }
.bar { height: 20px; flex: none; background: #3c3c3c; display: flex; align-items: center; border-bottom: 1px solid #232323; box-sizing: content-box; }
.plus { font-size: 21px; line-height: 20px; font-weight: 300; color: #d0d0d0; width: 20px; text-align: center; }
.search { height: 15px; background: #2a2a2a; border: 1px solid #212121; border-radius: 6px; display: flex; align-items: center; box-sizing: content-box; overflow: hidden; }
.search .ic10 { margin-left: 4px; }
.search .caret { margin-left: 0; }
.ph { color: #6f6f6f; margin-left: 1px; flex: 1; }
.pop { width: 17px; height: 15px; background: #3a3a3a; display: flex; align-items: center; justify-content: center; border-left: 1px solid #212121; }

/* hierarchy */
.hierarchy { width: 219px; }
.hier-tab { width: 92px; padding-left: 5px; border-top: 2px solid #2c5d87; padding-top: 0; }
.hierarchy .bar > .caret { margin-left: -1px; }
.hsearch { width: 174px; margin-left: 16px; }
.hier-body { flex: 1; display: flex; min-height: 0; }
.tree { flex: 1; min-width: 0; overflow: hidden; }
.hier-body .tree { background: linear-gradient(to right, #282828 29px, #383838 29px); }
.hrow { height: 16px; display: flex; align-items: center; position: relative; white-space: nowrap; color: #b8b8b8; }
.slot { width: 14px; height: 16px; display: flex; align-items: center; justify-content: center; flex: none; }
.slot .tri-d { border-left-width: 4.5px; border-right-width: 4.5px; border-top-width: 7px; }
.slot .tri-r { border-top-width: 4.5px; border-bottom-width: 4.5px; border-left-width: 7px; }
.label { margin-left: 4px; }
.hrow.scene { background: #4d4d4d; font-weight: 700; border-bottom: 1px solid #2a2a2a; box-sizing: border-box; }
.logo { color: #dcdcdc; }
.bluecube { color: #80d4ff; }
.scene-dots { position: absolute; left: 192px; top: 2px; }
.hrow.prefab .label { color: #7cabf0; }
.hrow.sel { background: #2c5d87; color: #fff; }
.hrow.sel .label { color: #f0f0f0; }
.hrow.sel .slot .tri-r { border-left-color: #7f9ab3; }
.gutter-sel { position: absolute; left: 0; top: 0; width: 29px; height: 16px; background: #2f4d78; }
.changed { position: absolute; left: 29px; top: 1px; width: 2px; height: 14px; background: #0c7dc4; }
.more { position: absolute; left: 196px; top: 3px; }
.vbar { width: 12px; flex: none; background: #3e3e3e; display: flex; flex-direction: column; align-items: center; border-left: 1px solid #333; box-sizing: border-box; }
.vbar .tri-u { margin-top: 6px; }
.vbar .tri-dn { margin-top: auto; margin-bottom: 5px; }
.vthumb { width: 9px; background: #5f5f5f; border-radius: 5px; }
.hthumb { height: 251px; margin-top: 6px; }

/* scene */
.scene { width: 457px; }
.scene-tab { width: 77px; padding-left: 8px; gap: 6px; }
.game-tab { margin-left: 8px; width: 75px; gap: 3px; }
.store-tab { gap: 5px; }
.scene-bar { height: 25px; gap: 0; }
.sb { height: 20px; background: #585858; border-radius: 3px; display: flex; align-items: center; justify-content: center; margin-right: 4px; flex: none; }
.sb.on { background: #46607c; }
.w38 { width: 38px; gap: 5px; }
.w32 { width: 32px; }
.two-d { font-weight: 700; color: #e6e6e6; font-size: 12px; }
.split { display: flex; margin-right: 4px; gap: 1px; }
.split .sb { margin: 0; }
.seg-l { width: 22px; border-radius: 3px 0 0 3px; }
.seg-r { width: 14px; border-radius: 0 3px 3px 0; }
.sep { width: 3px; height: 16px; margin: 0 7px; border-left: 1px solid #5a5a5a; border-right: 1px solid #5a5a5a; box-sizing: border-box; }
.stub { width: 12px; margin: 0; }
.viewport { flex: 1; position: relative; background: #474747; overflow: hidden; }
.gridlines {
  position: absolute;
  inset: 0;
  pointer-events: none;
  background-image:
    linear-gradient(to right, rgba(125, 125, 125, 0.42) 1px, transparent 1px),
    linear-gradient(to bottom, rgba(125, 125, 125, 0.42) 1px, transparent 1px);
  background-size: 39.45px 39.45px;
  background-position: 15.2px 25.4px;
}
.axis-v { position: absolute; left: 94px; top: 0; bottom: 0; width: 1px; background: #c4c4c4; }
.axis-h { position: absolute; left: 94px; right: 0; top: 223px; height: 1px; background: #c4c4c4; }
.origin-box { position: absolute; left: 80px; top: 215px; width: 27px; height: 14px; border: 1px solid #b0b0b0; }
.label-rect { position: absolute; left: 124px; top: 140px; width: 59px; height: 30px; border: 1px solid #aaa; }
.label-rect-2 { position: absolute; left: 125px; top: 146px; width: 59px; height: 1px; background: #6d6d6d; }
.sel-rect { position: absolute; left: 125px; top: 178px; width: 60px; height: 38px; border: 1px solid #a8d0a0; box-sizing: border-box; }
.anchor-star { position: absolute; left: 113px; top: 129px; width: 24px; height: 24px; color: #e8e8e8; }
.count { position: absolute; top: 146px; width: 20px; text-align: center; font: 24px "Liberation Sans", sans-serif; color: #f5f5f5; line-height: 28px; }
.die {
  position: absolute;
  left: 125px;
  top: 179px;
  width: 59px;
  height: 37px;
  background: #f5f5f5;
  border-radius: 2px;
  color: #323232;
  font: 26px "Liberation Sans", sans-serif;
  line-height: 37px;
  text-align: center;
}
.die-sel { width: 60px; height: 38px; top: 178px; }
.handle { position: absolute; width: 10px; height: 10px; border-radius: 50%; background: #1f6fe0; border: 1px solid #2a3240; box-sizing: border-box; }
.pivot { position: absolute; left: 149px; top: 209px; width: 13px; height: 13px; border-radius: 50%; border: 3px solid #2a6cc6; box-sizing: border-box; background: #c8c8c8; }
.palette { position: absolute; left: 2px; top: 2px; width: 43px; height: 146px; background: #191919; border-radius: 4px; box-sizing: border-box; padding: 17px 3px 0; display: flex; flex-direction: column; gap: 1px; }
.grip { position: absolute; left: 14px; top: 6px; width: 16px; height: 3px; border-top: 1px solid #777; border-bottom: 1px solid #777; }
.tool { height: 20px; background: #585858; display: flex; align-items: center; justify-content: center; }
.tool:first-of-type { border-radius: 3px 3px 0 0; }
.tool:last-of-type { border-radius: 0 0 3px 3px; }
.tool.on { background: #46607c; }

/* project */
.project { flex: 1; min-height: 0; }
.project .tabs, .project .tab { height: 18px; }
.proj-tab { width: 77px; padding-left: 4px; }
.console-tab { margin-left: 9px; gap: 5px; }
.proj-bar { height: 20px; position: relative; }
.proj-bar > .caret { margin-left: -1px; }
.psearch { width: 316px; margin: 0 1px 0 214px; }
.filter { height: 20px; width: 26px; display: flex; align-items: center; justify-content: center; border-left: 1px solid #2a2a2a; flex: none; gap: 3px; box-sizing: border-box; }
.hidden-pkgs { width: 41px; }
.dimstar { color: #777; }
.proj-body { flex: 1; display: flex; min-height: 0; }
.proj-side { width: 112px; flex: none; display: flex; border-right: 1px solid #232323; box-sizing: content-box; }
.prow { height: 16px; display: flex; align-items: center; white-space: nowrap; box-sizing: border-box; }
.prow .label { margin-left: 4px; }
.prow.head .label { font-weight: 700; }
.prow.gap { margin-top: 15px; }
.prow.sel { background: #4d4d4d; }
.pbar { width: 11px; }
.pthumb { width: 8px; height: 229px; margin-top: 4px; }
.proj-main { flex: 1; display: flex; flex-direction: column; min-width: 0; }
.crumbs { height: 20px; background: #3c3c3c; flex: none; display: flex; align-items: center; gap: 7px; padding-left: 4px; border-bottom: 1px solid #2c2c2c; }
.crumbs b { font-weight: 700; color: #b8b8b8; }
.crumbs span { color: #a0a0a0; }
.assets { flex: 1; background: #333; padding: 15px 0 0 18px; }
.asset { width: 54px; display: flex; flex-direction: column; align-items: center; font-size: 10px; color: #b8b8b8; white-space: nowrap; }
.bigcube { width: 52px; height: 56px; color: #80d4ff; }
.asset span { margin-top: 5px; }
.proj-foot { height: 19px; flex: none; background: #3c3c3c; border-top: 1px solid #2a2a2a; display: flex; justify-content: flex-end; align-items: center; padding-right: 17px; }
.zoom { width: 54px; height: 2px; background: #6e6e6e; position: relative; }
.zoom i { position: absolute; left: 28px; top: -4px; width: 10px; height: 10px; border-radius: 50%; background: #999; }

/* inspector */
.inspector { width: 396px; }
.insp-tab { width: 92px; padding-left: 9px; }
.runner-tab { margin-left: 9px; }
.insp-wrap { flex: 1; display: flex; min-height: 0; }
.insp-content { width: 389px; flex: none; overflow: hidden; }
.insp-scroll { width: 7px; background: #3a3a3a; display: flex; flex-direction: column; align-items: center; }
.insp-scroll .tri-u { margin-top: 5px; }
.insp-thumb { width: 7px; height: 364px; margin-top: 8px; background: #5a5a5a; border-radius: 3px 0 0 3px; }
.insp-scroll .tri-dn { margin-top: auto; margin-bottom: 5px; }

.go-head { height: 59px; display: flex; box-sizing: border-box; padding-top: 9px; }
.go-icon { width: 46px; position: relative; }
.go-cube { width: 19px; height: 20px; margin: 2px 0 0 8px; color: #80d4ff; }
.go-icon .caret { position: absolute; left: 27px; top: 21px; }
.go-row { display: flex; align-items: center; height: 18px; }
.go-row.second { margin-top: 6px; }
.check { width: 14px; height: 14px; background: #2a2a2a; border: 1px solid #212121; border-radius: 2px; display: flex; align-items: center; justify-content: center; box-sizing: border-box; flex: none; }
.check.blank { background: #353535; margin-left: 3px; }
.field { height: 18px; line-height: 16px; background: #2a2a2a; border: 1px solid #212121; border-radius: 3px; box-sizing: border-box; color: #d2d2d2; padding-left: 2px; font-size: 12px; }
.field.off { background: #333; color: #6f6f6f; }
.name { width: 243px; margin-left: 6px; font: 700 12px Inter, sans-serif; color: #c8c8c8; outline: none; }
.static { margin-left: 4px; color: #a8a8a8; width: 45px; }
.go-lbl { color: #a0a0a0; }
.tag-lbl { margin-left: -4px; width: 27px; }
.dropdown { height: 18px; background: #515151; border: 1px solid #303030; border-radius: 3px; display: flex; align-items: center; justify-content: space-between; box-sizing: border-box; padding: 0 5px 0 2px; color: #c8c8c8; }
.dropdown .caret { margin: 0; }
.tag-dd { width: 137px; }
.layer-lbl { margin-left: 14px; width: 37px; }
.layer-dd { width: 127px; }
.dropdown.wide { width: 222px; height: 17px; }

.comp-head { height: 21px; background: #3e3e3e; border-top: 1px solid #1a1a1a; border-bottom: 1px solid #2c2c2c; box-sizing: border-box; display: flex; align-items: center; padding-left: 6px; position: relative; }
.comp-head .tri-d { border-left-width: 4.5px; border-right-width: 4.5px; border-top-width: 7px; }
.comp-ic { width: 14px; height: 14px; margin-left: 6px; }
.comp-ic.eye { width: 16px; height: 12px; margin-left: 5px; }
.comp-title { position: absolute; left: 60px; margin-top: 2px; font-weight: 700; color: #c8c8c8; font-size: 12px; }
.comp-tools { margin-left: auto; display: flex; gap: 9px; align-items: center; padding-right: 11px; }
.comp-tools .dots { margin-left: 3.5px; }
.head-check { position: absolute; left: 40px; top: 3px; }

.rect-body { height: 196px; box-sizing: border-box; padding-top: 5px; }
.helpbox { margin: 0 5px 0 18px; height: 18px; border: 1px solid #282828; border-radius: 3px; box-sizing: border-box; background: #3a3a3a; font-size: 10.25px; line-height: 16px; padding-left: 3px; color: #9a9a9a; }
.rect-main { height: 81px; display: flex; }
.anchor-side { width: 158px; position: relative; flex: none; }
.left-lbl { position: absolute; left: 36px; top: 8px; font-size: 10px; }
.top-lbl { position: absolute; left: 8px; top: 38px; font-size: 10px; transform: rotate(-90deg); }
.anchor-box { position: absolute; left: 27px; top: 26px; width: 35px; height: 35px; border: 1px solid #8a5252; box-sizing: border-box; }
.anchor-box .inner { position: absolute; left: 8px; top: 8px; width: 17px; height: 17px; border: 1px solid #a8a8a8; box-sizing: border-box; }
.anchor-box .dot { position: absolute; left: -1px; top: -1px; width: 3px; height: 3px; background: #e8a000; }
.rect-grid { flex: 1; display: grid; grid-template-columns: 73px 73px 73px; column-gap: 4px; padding-top: 4px; align-content: start; }
.rg-cell { height: 36px; display: flex; flex-direction: column; }
.rg-lbl { height: 18px; line-height: 19px; color: #b8b8b8; padding-left: 1px; }
.rg-lbl.off { color: #717171; }
.btns { justify-content: flex-end; align-items: flex-end; }
.blueprint { display: flex; width: 50px; height: 18px; margin-bottom: 1px; gap: 1px; }
.blueprint span { flex: 1; background: #585858; display: flex; align-items: center; justify-content: center; color: #8f8f8f; }
.blueprint span:first-child { border-radius: 3px 0 0 3px; }
.blueprint span:last-child { border-radius: 0 3px 3px 0; }
.anchors-row { height: 14px; display: flex; align-items: center; position: relative; font-weight: 500; color: #c8c8c8; padding-left: 7px; }
.anchors-row .tri-r { border-top-width: 4px; border-bottom-width: 4px; border-left-width: 6px; margin-right: 5px; }
.bluebar { position: absolute; left: 0; top: 0; bottom: 0; width: 2px; background: #0c7dc4; }
.xyz { height: 18px; display: flex; align-items: center; padding-left: 19px; position: relative; }
.xyz-lbl { width: 143px; flex: none; }
.xyz .axis { flex: none; color: #a0a0a0; }
.pivot-row { margin-top: 3px; }
.pivot-row .axis { width: 11px; margin-left: -3px; text-align: center; }
.pivot-row .axis ~ .axis { margin-left: 0; }
.pivot-row .field { width: 61px; margin-right: 5px; }
.rot-row { margin-top: 10px; }
.scale-row { margin-top: 2px; }
.rot-row .axis, .scale-row .axis { width: 14px; padding-left: 1px; box-sizing: border-box; }
.rot-row .field, .scale-row .field { width: 56px; margin-right: 6px; }
.unlink { position: absolute; left: 140px; top: 4px; }

.canvas-body { height: 32px; padding-top: 4px; box-sizing: border-box; }
.prop { height: 20px; display: flex; align-items: center; padding-left: 19px; white-space: nowrap; }
.prop-lbl { width: 143px; flex: none; }
.prop.indent { padding-left: 34px; }
.prop.indent .prop-lbl { width: 128px; }
.button-body { padding-top: 4px; }
.objfield { width: 222px; height: 17px; background: #2a2a2a; border: 1px solid #212121; border-radius: 3px; box-sizing: border-box; display: flex; align-items: center; padding-left: 2px; color: #c8c8c8; overflow: hidden; }
.obj-pick { margin-left: auto; width: 18px; height: 17px; background: #3a3a3a; display: flex; align-items: center; justify-content: center; }
.color { width: 222px; height: 17px; display: flex; background: #2a2a2a; border-radius: 3px; padding: 1px; box-sizing: border-box; }
.swatch { flex: 1; position: relative; }
.picker { width: 18px; background: #3a3a3a; display: flex; align-items: center; justify-content: center; color: #c4c4c4; }
.strip { position: absolute; left: 0; right: 0; bottom: 0; height: 3px; }
.strip.white { background: #fff; }
.strip.half { background: linear-gradient(to right, #fff 50%, #000 50%); }
.slider { width: 168px; height: 10px; position: relative; flex: none; }
.slider .track { position: absolute; left: 2px; right: 0; top: 4px; height: 2px; background: #5f5f5f; }
.slider .thumb { position: absolute; left: -1px; top: 0; width: 10px; height: 10px; border-radius: 50%; background: #999; }
.mult { width: 50px; margin-left: 5px; padding-left: 3px; }
.field.wide { width: 222px; padding-left: 3px; }
.nav { margin-top: 9px; }
.nav .dropdown { margin-bottom: 2px; }
.visualize { display: block; width: 224px; height: 16px; margin: 3px 0 0 160px; padding-right: 2px; background: #585858; border: 1px solid #303030; border-radius: 3px; box-sizing: border-box; font-size: 12px; line-height: 14px; color: #c8c8c8; }
.onclick-wrap { position: relative; margin-top: 12px; height: 20px; padding-left: 18px; }
.onclick { width: 366px; height: 30px; border: 1px solid #232323; border-radius: 3px; box-sizing: border-box; font-weight: 500; padding: 1px 0 0 7px; color: #c8c8c8; background: linear-gradient(#383838 18px, #232323 18px, #232323 19px, #333 19px); }

.mini { height: 21px; flex: none; background: #3c3c3c; border-top: 1px solid #232323; display: flex; align-items: center; box-sizing: border-box; position: relative; }
.mini-tab { width: 58px; margin-left: 4px; height: 20px; border-left: 1px solid #2c2c2c; border-right: 1px solid #2c2c2c; display: flex; align-items: center; gap: 3px; padding-left: 3px; box-sizing: border-box; font-weight: 500; color: #c8c8c8; }
.mini-lines { flex: 1; height: 3px; margin: 0 8px 0 4px; border-top: 1px solid #6a6a6a; border-bottom: 1px solid #6a6a6a; }
.mini .dots { margin-right: 4px; }

.status { height: 22px; flex: none; display: flex; justify-content: flex-end; align-items: center; }
.st-ic { width: 26px; height: 20px; display: flex; align-items: center; justify-content: center; border-left: 1px solid #2a2a2a; box-sizing: border-box; }
.st-ic.last { margin-right: -4px; }

.pointer { position: absolute; left: 945px; top: 621px; }
</style>
